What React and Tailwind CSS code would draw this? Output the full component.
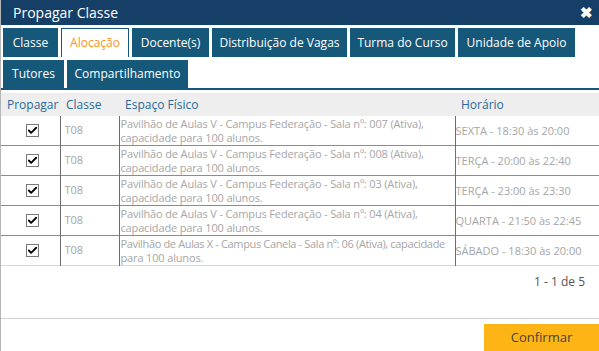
import { Check } from 'lucide-react';

const tabsTop = [
  { label: 'Classe', w: 'w-[55px]' },
  { label: 'Alocação', w: 'w-[68px]', active: true },
  { label: 'Docente(s)', w: 'w-[77px]' },
  { label: 'Distribuição de Vagas', w: 'w-[135px]' },
  { label: 'Turma do Curso', w: 'w-[105px]' },
  { label: 'Unidade de Apoio', w: 'w-[117px]' },
];

const tabsBottom = [
  { label: 'Tutores', w: 'w-[61px]' },
  { label: 'Compartilhamento', w: 'w-[121px]' },
];

const rows = [
  { espaco: ['Pavilhão de Aulas V - Campus Federação - Sala nº: 007 (Ativa),', 'capacidade para 100 alunos.'], horario: 'SEXTA - 18:30 às 20:00' },
  { espaco: ['Pavilhão de Aulas V - Campus Federação - Sala nº: 008 (Ativa),', 'capacidade para 100 alunos.'], horario: 'TERÇA - 20:00 às 22:40' },
  { espaco: ['Pavilhão de Aulas V - Campus Federação - Sala nº: 03 (Ativa),', 'capacidade para 100 alunos.'], horario: 'TERÇA - 23:00 às 23:30' },
  { espaco: ['Pavilhão de Aulas V - Campus Federação - Sala nº: 04 (Ativa),', 'capacidade para 100 alunos.'], horario: 'QUARTA - 21:50 às 22:45' },
  { espaco: ['Pavilhão de Aulas X - Campus Canela - Sala nº: 06 (Ativa), capacidade', 'para 100 alunos.'], horario: 'SÁBADO - 18:30 às 20:00', tight: true },
];

function Tab({ label, w, active }) {
  return (
    <div
      className={
        'h-full flex items-center justify-center text-[12px] ' + w + ' ' +
        (active ? 'bg-white border border-[#16587a] border-b-0 text-[#f7931e]' : 'bg-[#16587a] text-white')
      }
    >
      {label}
    </div>
  );
}

export default function App() {
  return (
    <div
      className="w-[599px] h-[351px] bg-white border-l border-[#b5b5b5] flex flex-col overflow-hidden"
      style={{ fontFamily: '"Segoe UI", "Open Sans", sans-serif' }}
    >
      <div className="h-[25px] bg-[#163f68] flex items-center justify-between pl-[12px] pr-[6px] shrink-0">
        <span className="text-white text-[14px]">Propagar Classe</span>
        <span className="text-white text-[15px] font-bold leading-none">✖</span>
      </div>

      <div className="pt-[3px] pl-[2px] flex flex-col gap-[3px] border-b-2 border-[#16587a] shrink-0">
        <div className="flex gap-[3px] h-[29px]">
          {tabsTop.map((t) => <Tab key={t.label} {...t} />)}
        </div>
        <div className="flex gap-[3px] h-[28px]">
          {tabsBottom.map((t) => <Tab key={t.label} {...t} />)}
        </div>
      </div>

      <div className="mt-[3px]">
        <table className="w-full table-fixed border-collapse text-[11px]">
          <colgroup>
            <col className="w-[59px]" />
            <col className="w-[59px]" />
            <col className="w-[336px]" />
            <col />
          </colgroup>
          <thead>
            <tr className="bg-[#eeeeee] h-[23px] text-[#2b6a9a] text-[12px]">
              <th className="font-normal text-left pl-[6px] pt-[1px]">Propagar</th>
              <th className="font-normal text-left pl-[6px] pt-[1px]">Classe</th>
              <th className="font-normal text-left pl-[6px] pt-[1px]">Espaço Físico</th>
              <th className="font-normal text-left pl-[6px] pt-[1px]">Horário</th>
            </tr>
          </thead>
          <tbody>
            {rows.map((r, i) => (
              <tr
                key={i}
                className={'h-[29px] text-[#a6a6a6] border-b ' + (i === rows.length - 1 ? 'border-[#d8d8d8]' : 'border-[#8c8c8c]')}
              >
                <td className="border-r border-[#6e6e6e]">
                  <div className="flex justify-center pl-[5px]">
                    <div className="w-[13px] h-[13px] border border-[#7a7a7a] bg-white flex items-center justify-center">
                      <Check className="w-[11px] h-[11px] text-black" strokeWidth={4} />
                    </div>
                  </div>
                </td>
                <td className="border-r border-[#6e6e6e] pl-[4px] text-[11px]">T08</td>
                <td className="border-r border-[#6e6e6e] pl-[1px] pr-0 leading-[14px] align-top pt-[1px] tracking-[-0.15px] whitespace-nowrap overflow-hidden">
                  <span className={r.tight ? 'tracking-[-0.35px]' : ''}>{r.espaco[0]}</span>
                  <br />
                  {r.espaco[1]}
                </td>
                <td className="pl-0 pt-[2px] whitespace-nowrap">{r.horario}</td>
              </tr>
            ))}
          </tbody>
        </table>
      </div>

      <div className="flex justify-end pr-[14px] pt-[7px] text-[12px] text-[#555]">1 - 1 de 5</div>

      <div className="mt-auto border-t border-[#cfcfcf] flex justify-end pt-[5px]">
        <button className="w-[115px] h-[27px] bg-[#fdb515] text-[#444] text-[13px] flex items-center justify-center">
          Confirmar
        </button>
      </div>
    </div>
  );
}
